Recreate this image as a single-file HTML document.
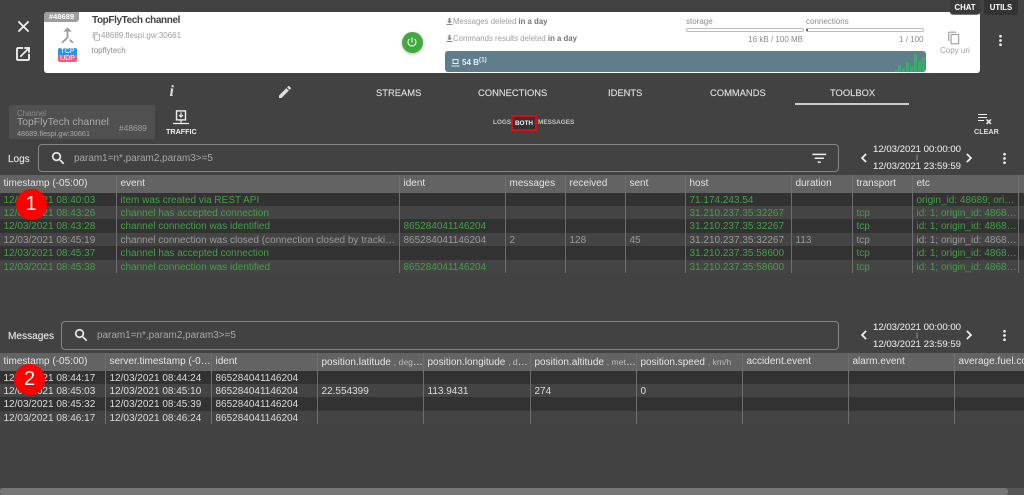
<!DOCTYPE html>
<html><head><meta charset="utf-8"><style>
html,body{margin:0;padding:0;width:1024px;height:495px;overflow:hidden;background:#424242;font-family:"Liberation Sans",sans-serif}
body{filter:blur(.3px)}
.a{position:absolute;white-space:nowrap;line-height:1}
svg{position:absolute;display:block}
.tab{font-size:9.4px;color:#ddd;top:87.5px;-webkit-text-stroke:.15px #ddd}
.sm{font-size:8px;color:#9e9e9e}
.date{font-size:9.6px;color:#e2e2e2;width:100px;left:867px;text-align:center;-webkit-text-stroke:.1px #e2e2e2}
.tbl{position:absolute;left:0;overflow:hidden;width:1024px}
.r{display:flex;height:13.4px;line-height:15.4px;font-size:10px}
.r.h{height:17.6px;line-height:18.5px;background:#636363;color:#e4e4e4;font-size:10px}
.r:nth-child(even){background:#323232}
.r:nth-child(odd):not(.h){background:#444}
.c{flex:none;box-sizing:border-box;padding-left:3.5px;border-right:1px solid #6e6e6e;overflow:hidden;white-space:nowrap;text-overflow:ellipsis}
.g{color:#43a047}.y{color:#9a9a9a}.w{color:#dcdcdc}
.h small{font-size:8.6px;color:#bbb}
#L .c:nth-child(1){width:117px}#L .c:nth-child(2){width:283px}#L .c:nth-child(3){width:106px}#L .c:nth-child(4),#L .c:nth-child(5),#L .c:nth-child(6){width:60px}#L .c:nth-child(7){width:106px}#L .c:nth-child(8){width:61px}#L .c:nth-child(9){width:60px}#L .c:nth-child(10){width:106px}#L .c:nth-child(11){width:6px}
#M .c{width:106px}#M .c:nth-child(5){width:107px}#M .c:nth-child(10){width:80px;border:0}
.in{position:absolute;box-sizing:border-box;border:1px solid #858585;border-radius:4px}
.ph{font-size:9.95px;color:#a8a8a8}
.bg{position:absolute;width:31px;height:31px;border-radius:50%;background:#f00;color:#fff;font-size:20px;text-align:center;line-height:31px}
.bar{position:absolute;box-sizing:border-box;height:4px;border:1px solid #bdbdbd;border-radius:2px;background:#fff}
.b{position:absolute;width:3px;background:#3cab6f;bottom:0}
.ico{stroke:#eee;stroke-width:.5}
</style></head><body>

<svg style="left:13.5px;top:16.5px" width="19" height="19" viewBox="0 0 24 24" fill="#eee" class="ico"><path d="M19 6.41L17.59 5 12 10.59 6.41 5 5 6.41 10.59 12 5 17.59 6.41 19 12 13.41 17.59 19 19 17.59 13.41 12z"/></svg>
<svg style="left:14px;top:45px" width="18" height="18" viewBox="0 0 24 24" fill="#eee" class="ico"><path d="M19 19H5V5h7V3H5c-1.11 0-2 .9-2 2v14c0 1.1.89 2 2 2h14c1.1 0 2-.9 2-2v-7h-2v7zM14 3v2h3.59l-9.83 9.83 1.41 1.41L19 6.41V10h2V3h-7z"/></svg>

<div style="position:absolute;left:44px;top:12px;width:936px;height:61px;background:#fff;border-radius:3px"></div>
<div class="a" style="left:44px;top:12px;width:35px;height:9.5px;background:#9e9e9e;color:#fff;font-size:7.6px;font-weight:bold;text-align:center;line-height:10px;border-radius:3px 0 3px 0">#48689</div>
<svg style="left:56px;top:24px" width="23" height="23" viewBox="0 0 24 24" fill="#9e9e9e"><path d="M17 20.41L18.41 19 15 15.59 13.59 17 17 20.41zM7.5 8H11v5.59L5.59 19 7 20.41l6-6V8h3.5L12 3.5 7.5 8z"/></svg>
<div class="a" style="left:58px;top:48px;width:19px;height:7px;background:#2196f3;color:#fff;font-size:7px;text-align:center;line-height:7.5px;border-radius:2px 2px 0 0">TCP</div>
<div class="a" style="left:58px;top:55px;width:19px;height:7px;background:#ec5f7f;color:#fff;font-size:7px;text-align:center;line-height:7.5px;border-radius:0 0 2px 2px">UDP</div>
<div class="a" style="left:92px;top:16px;font-size:10px;letter-spacing:-.4px;font-weight:bold;color:#424242">TopFlyTech channel</div>
<svg style="left:91.5px;top:32px" width="9" height="9" viewBox="0 0 24 24" fill="#9e9e9e"><path d="M16 1H4c-1.1 0-2 .9-2 2v14h2V3h12V1zm3 4H8c-1.1 0-2 .9-2 2v14c0 1.1.9 2 2 2h11c1.1 0 2-.9 2-2V7c0-1.1-.9-2-2-2zm0 16H8V7h11v14z"/></svg>
<div class="a sm" style="left:101px;top:32px">48689.flespi.gw:30661</div>
<div class="a sm" style="left:91.5px;top:46.5px;color:#8a8a8a">topflytech</div>
<div style="position:absolute;left:401.5px;top:32px;width:21px;height:21px;border-radius:50%;background:#43a83f;box-shadow:0 1px 3px rgba(0,0,0,.3)"></div>
<svg style="left:406px;top:36px" width="12" height="12" viewBox="0 0 24 24" fill="#fff"><path d="M13 3h-2v10h2V3zm4.83 2.17l-1.42 1.42C17.99 7.86 19 9.81 19 12c0 3.87-3.13 7-7 7s-7-3.13-7-7c0-2.19 1.01-4.14 2.58-5.42L6.17 5.17C4.23 6.82 3 9.26 3 12c0 4.97 4.03 9 9 9s9-4.03 9-9c0-2.74-1.23-5.18-3.17-6.83z"/></svg>

<svg style="left:446px;top:16.5px" width="7" height="9" viewBox="0 0 7 9" fill="#8a8a8a"><path d="M2.5 1h2v3h1.5L3.5 6.5 1 4h1.5zM.5 7h6v1h-6z"/></svg>
<div class="a sm" style="left:453px;top:17.5px;font-size:7.8px">Messages deleted <b style="color:#757575">in a day</b></div>
<svg style="left:446px;top:34px" width="7" height="9" viewBox="0 0 7 9" fill="#8a8a8a"><path d="M2.5 1h2v3h1.5L3.5 6.5 1 4h1.5zM.5 7h6v1h-6z"/></svg>
<div class="a sm" style="left:453px;top:35px;font-size:7.8px">Commands results deleted <b style="color:#757575">in a day</b></div>

<div style="position:absolute;left:445px;top:51px;width:481px;height:21px;background:#607d8b;border-radius:3px;overflow:hidden">
<div class="b" style="left:449.5px;height:2.5px"></div><div class="b" style="left:453px;height:7px"></div><div class="b" style="left:457px;height:4px"></div><div class="b" style="left:461px;height:10px"></div><div class="b" style="left:465px;height:6px"></div><div class="b" style="left:469px;height:18px"></div><div class="b" style="left:473px;height:11px"></div><div class="b" style="left:477px;height:15px"></div>
</div>
<svg style="left:451px;top:58px" width="9" height="10" viewBox="0 0 9 10" fill="#e8eef0"><path d="M1.5 1h6v5h-6zM2.5 2v3h4V2zM.5 7.5h8v1h-8z"/></svg>
<div class="a" style="left:462px;top:58.5px;font-size:8px;font-weight:bold;color:#e8eef0">54 B<sup style="font-size:6.5px;line-height:0">(1)</sup></div>

<div class="a sm" style="left:686px;top:17.5px;color:#8a8a8a">storage</div>
<div class="bar" style="left:686px;top:27.5px;width:117.5px"></div>
<div class="a sm" style="right:221px;top:35.5px;color:#8a8a8a">16 kB / 100 MB</div>
<div class="a sm" style="left:806px;top:17.5px;color:#8a8a8a">connections</div>
<div class="bar" style="left:806px;top:27.5px;width:118px;border-left:2px solid #666"></div>
<div class="a sm" style="right:100.5px;top:35.5px;color:#8a8a8a">1 / 100</div>
<svg style="left:947px;top:31px" width="14" height="14" viewBox="0 0 24 24" fill="#9e9e9e"><path d="M16 1H4c-1.1 0-2 .9-2 2v14h2V3h12V1zm3 4H8c-1.1 0-2 .9-2 2v14c0 1.1.9 2 2 2h11c1.1 0 2-.9 2-2V7c0-1.1-.9-2-2-2zm0 16H8V7h11v14z"/></svg>
<div class="a sm" style="left:940px;top:46.5px;color:#a0a0a0">Copy uri</div>
<svg style="left:992px;top:31.5px" width="17" height="17" viewBox="0 0 24 24" fill="#eee"><path d="M12 8c1.1 0 2-.9 2-2s-.9-2-2-2-2 .9-2 2 .9 2 2 2zm0 2c-1.1 0-2 .9-2 2s.9 2 2 2 2-.9 2-2-.9-2-2-2zm0 6c-1.1 0-2 .9-2 2s.9 2 2 2 2-.9 2-2-.9-2-2-2z"/></svg>

<div class="a" style="left:950px;top:0;width:30px;height:14.5px;background:#3a3a3a;border-bottom:1px solid #777;box-sizing:border-box;border-radius:0 0 3px 3px;color:#fff;font-size:7.8px;font-weight:bold;text-align:center;line-height:15px">CHAT</div>
<div class="a" style="left:984px;top:0;width:34px;height:14.5px;background:#333;border-radius:0 0 3px 3px;color:#fff;font-size:7.8px;font-weight:bold;text-align:center;line-height:15px">UTILS</div>

<div class="a" style="left:169.5px;top:84px;font-family:'Liberation Serif',serif;font-style:italic;font-weight:bold;font-size:16px;color:#ddd">i</div>
<svg style="left:277px;top:83.5px" width="16" height="16" viewBox="0 0 24 24" fill="#ddd"><path d="M3 17.25V21h3.75L17.81 9.94l-3.75-3.75L3 17.25zM20.71 7.04c.39-.39.39-1.02 0-1.41l-2.34-2.34c-.39-.39-1.02-.39-1.41 0l-1.83 1.83 3.75 3.75 1.83-1.83z"/></svg>
<div class="a tab" style="left:376px">STREAMS</div>
<div class="a tab" style="left:478px">CONNECTIONS</div>
<div class="a tab" style="left:608px">IDENTS</div>
<div class="a tab" style="left:710px">COMMANDS</div>
<div class="a tab" style="left:830px">TOOLBOX</div>
<div style="position:absolute;left:795px;top:103px;width:114px;height:1.5px;background:#ccc"></div>

<div style="position:absolute;left:9px;top:105px;width:146px;height:34px;background:#505050;border-radius:2px"></div>
<div class="a" style="left:17px;top:110px;font-size:7.8px;color:#8c8c8c">Channel</div>
<div class="a" style="left:17px;top:118px;font-size:10.4px;color:#aaa">TopFlyTech channel</div>
<div class="a" style="left:17px;top:130px;font-size:7.3px;color:#a8a8a8">48689.flespi.gw:30661</div>
<div class="a" style="left:119px;top:123.5px;font-size:8.4px;color:#a0a0a0">#48689</div>
<svg style="left:172px;top:110px" width="18" height="16" viewBox="0 0 18 16" fill="none" stroke="#eee"><rect x="4.5" y=".9" width="9" height="9" stroke-width="1.4"/><path d="M9 2.5v4M7 5l2 2 2-2M9 10v3M1 13.5h16" stroke-width="1.2"/></svg>
<div class="a" style="left:166px;top:128px;font-size:7.2px;font-weight:bold;color:#eee">TRAFFIC</div>
<div class="a" style="left:493px;top:119.5px;font-size:6.4px;font-weight:bold;color:#c4c4c4">LOGS</div>
<div class="a" style="left:511px;top:115px;width:26px;height:16px;box-sizing:border-box;border:2px solid #e30613;background:#333;color:#eee;font-size:6.4px;font-weight:bold;text-align:center;line-height:13px">BOTH</div>
<div class="a" style="left:538px;top:119.5px;font-size:6.4px;font-weight:bold;color:#c4c4c4">MESSAGES</div>
<svg style="left:977px;top:113px" width="16" height="12" viewBox="0 0 16 12" fill="none" stroke="#eee"><path d="M1 1.5h9M1 4.5h9M1 7.5h6" stroke-width="1"/><path d="M9.5 6.5l4.5 4.5M14 6.5l-4.5 4.5" stroke-width="1.5"/></svg>
<div class="a" style="left:974px;top:128px;font-size:7.2px;font-weight:bold;color:#ddd">CLEAR</div>

<div class="a" style="left:8px;top:154.5px;font-size:10px;color:#e0e0e0;-webkit-text-stroke:.15px #e0e0e0">Logs</div>
<div class="in" style="left:37.5px;top:143.5px;width:801px;height:28.5px"></div>
<svg style="left:49.6px;top:149.6px" width="16.5" height="16.5" viewBox="0 0 24 24" fill="#eee" class="ico"><path d="M15.5 14h-.79l-.28-.27C15.41 12.59 16 11.11 16 9.5 16 5.91 13.09 3 9.5 3S3 5.91 3 9.5 5.91 16 9.5 16c1.61 0 3.09-.59 4.23-1.57l.27.28v.79l5 4.99L20.49 19l-4.99-5zm-6 0C7.01 14 5 11.99 5 9.5S7.01 5 9.5 5 14 7.01 14 9.5 11.99 14 9.5 14z"/></svg>
<div class="a ph" style="left:74px;top:153.5px">param1=n*,param2,param3&gt;=5</div>
<svg style="left:810px;top:148.5px" width="18.5" height="18.5" viewBox="0 0 24 24" fill="#eee"><path d="M10 18h4v-2h-4v2zM3 6v2h18V6H3zm3 7h12v-2H6v2z"/></svg>
<svg style="left:855px;top:149px" width="18" height="18" viewBox="0 0 24 24" fill="#eee" class="ico"><path d="M15.41 7.41L14 6l-6 6 6 6 1.41-1.41L10.83 12z"/></svg>
<svg style="left:960px;top:149px" width="18" height="18" viewBox="0 0 24 24" fill="#eee" class="ico"><path d="M10 6L8.59 7.41 13.17 12l-4.58 4.59L10 18l6-6z"/></svg>
<div class="a date" style="top:145px">12/03/2021 00:00:00</div>
<div class="a date" style="top:155px;font-size:6px;color:#aaa">|</div>
<div class="a date" style="top:162px">12/03/2021 23:59:59</div>
<svg style="left:995.5px;top:149.5px" width="17" height="17" viewBox="0 0 24 24" fill="#eee"><path d="M12 8c1.1 0 2-.9 2-2s-.9-2-2-2-2 .9-2 2 .9 2 2 2zm0 2c-1.1 0-2 .9-2 2s.9 2 2 2 2-.9 2-2-.9-2-2-2zm0 6c-1.1 0-2 .9-2 2s.9 2 2 2 2-.9 2-2-.9-2-2-2z"/></svg>

<div class="tbl" id="L" style="top:175px">
<div class="r h"><div class="c">timestamp (-05:00)</div><div class="c">event</div><div class="c">ident</div><div class="c">messages</div><div class="c">received</div><div class="c">sent</div><div class="c">host</div><div class="c">duration</div><div class="c">transport</div><div class="c">etc</div><div class="c"></div></div>
<div class="r g"><div class="c">12/03/2021 08:40:03</div><div class="c">item was created via REST API</div><div class="c"></div><div class="c"></div><div class="c"></div><div class="c"></div><div class="c">71.174.243.54</div><div class="c"></div><div class="c"></div><div class="c">origin_id: 48689; origin_type: 1</div><div class="c"></div></div>
<div class="r g"><div class="c">12/03/2021 08:43:26</div><div class="c">channel has accepted connection</div><div class="c"></div><div class="c"></div><div class="c"></div><div class="c"></div><div class="c">31.210.237.35:32267</div><div class="c"></div><div class="c">tcp</div><div class="c">id: 1; origin_id: 48689; origin</div><div class="c"></div></div>
<div class="r g"><div class="c">12/03/2021 08:43:28</div><div class="c">channel connection was identified</div><div class="c">865284041146204</div><div class="c"></div><div class="c"></div><div class="c"></div><div class="c">31.210.237.35:32267</div><div class="c"></div><div class="c">tcp</div><div class="c">id: 1; origin_id: 48689; origin</div><div class="c"></div></div>
<div class="r y"><div class="c">12/03/2021 08:45:19</div><div class="c">channel connection was closed (connection closed by tracking device)</div><div class="c">865284041146204</div><div class="c">2</div><div class="c">128</div><div class="c">45</div><div class="c">31.210.237.35:32267</div><div class="c">113</div><div class="c">tcp</div><div class="c">id: 1; origin_id: 48689; origin</div><div class="c"></div></div>
<div class="r g"><div class="c">12/03/2021 08:45:37</div><div class="c">channel has accepted connection</div><div class="c"></div><div class="c"></div><div class="c"></div><div class="c"></div><div class="c">31.210.237.35:58600</div><div class="c"></div><div class="c">tcp</div><div class="c">id: 1; origin_id: 48689; origin</div><div class="c"></div></div>
<div class="r g"><div class="c">12/03/2021 08:45:38</div><div class="c">channel connection was identified</div><div class="c">865284041146204</div><div class="c"></div><div class="c"></div><div class="c"></div><div class="c">31.210.237.35:58600</div><div class="c"></div><div class="c">tcp</div><div class="c">id: 1; origin_id: 48689; origin</div><div class="c"></div></div>
</div>
<div class="bg" style="left:15.5px;top:188.5px">1</div>

<div class="a" style="left:8px;top:331.5px;font-size:10.1px;color:#e0e0e0;-webkit-text-stroke:.15px #e0e0e0">Messages</div>
<div class="in" style="left:61px;top:321px;width:777.5px;height:28.5px"></div>
<svg style="left:73px;top:327px" width="16.5" height="16.5" viewBox="0 0 24 24" fill="#eee" class="ico"><path d="M15.5 14h-.79l-.28-.27C15.41 12.59 16 11.11 16 9.5 16 5.91 13.09 3 9.5 3S3 5.91 3 9.5 5.91 16 9.5 16c1.61 0 3.09-.59 4.23-1.57l.27.28v.79l5 4.99L20.49 19l-4.99-5zm-6 0C7.01 14 5 11.99 5 9.5S7.01 5 9.5 5 14 7.01 14 9.5 11.99 14 9.5 14z"/></svg>
<div class="a ph" style="left:97px;top:330.5px">param1=n*,param2,param3&gt;=5</div>
<svg style="left:855px;top:326px" width="18" height="18" viewBox="0 0 24 24" fill="#eee" class="ico"><path d="M15.41 7.41L14 6l-6 6 6 6 1.41-1.41L10.83 12z"/></svg>
<svg style="left:960px;top:326px" width="18" height="18" viewBox="0 0 24 24" fill="#eee" class="ico"><path d="M10 6L8.59 7.41 13.17 12l-4.58 4.59L10 18l6-6z"/></svg>
<div class="a date" style="top:322.5px">12/03/2021 00:00:00</div>
<div class="a date" style="top:332.5px;font-size:6px;color:#aaa">|</div>
<div class="a date" style="top:339.5px">12/03/2021 23:59:59</div>
<svg style="left:995.5px;top:326.5px" width="17" height="17" viewBox="0 0 24 24" fill="#eee"><path d="M12 8c1.1 0 2-.9 2-2s-.9-2-2-2-2 .9-2 2 .9 2 2 2zm0 2c-1.1 0-2 .9-2 2s.9 2 2 2 2-.9 2-2-.9-2-2-2zm0 6c-1.1 0-2 .9-2 2s.9 2 2 2 2-.9 2-2-.9-2-2-2z"/></svg>

<div class="tbl" id="M" style="top:353px">
<div class="r h"><div class="c">timestamp (-05:00)</div><div class="c">server.timestamp (-05:00)</div><div class="c">ident</div><div class="c">position.latitude <small>, degrees</small></div><div class="c">position.longitude <small>, degrees</small></div><div class="c">position.altitude <small>, meters</small></div><div class="c">position.speed <small>, km/h</small></div><div class="c">accident.event</div><div class="c">alarm.event</div><div class="c" style="text-overflow:clip">average.fuel.consumption</div></div>
<div class="r w"><div class="c">12/03/2021 08:44:17</div><div class="c">12/03/2021 08:44:24</div><div class="c">865284041146204</div><div class="c"></div><div class="c"></div><div class="c"></div><div class="c"></div><div class="c"></div><div class="c"></div><div class="c"></div></div>
<div class="r w"><div class="c">12/03/2021 08:45:03</div><div class="c">12/03/2021 08:45:10</div><div class="c">865284041146204</div><div class="c">22.554399</div><div class="c">113.9431</div><div class="c">274</div><div class="c">0</div><div class="c"></div><div class="c"></div><div class="c"></div></div>
<div class="r w"><div class="c">12/03/2021 08:45:32</div><div class="c">12/03/2021 08:45:39</div><div class="c">865284041146204</div><div class="c"></div><div class="c"></div><div class="c"></div><div class="c"></div><div class="c"></div><div class="c"></div><div class="c"></div></div>
<div class="r w"><div class="c">12/03/2021 08:46:17</div><div class="c">12/03/2021 08:46:24</div><div class="c">865284041146204</div><div class="c"></div><div class="c"></div><div class="c"></div><div class="c"></div><div class="c"></div><div class="c"></div><div class="c"></div></div>
</div>
<div class="bg" style="left:14px;top:364px">2</div>

<div style="position:absolute;left:0;top:488px;width:1024px;height:7px;background:#555"></div>
<div style="position:absolute;left:0;top:488px;width:1008px;height:7px;background:#777;border-radius:3px"></div>
</body></html>
